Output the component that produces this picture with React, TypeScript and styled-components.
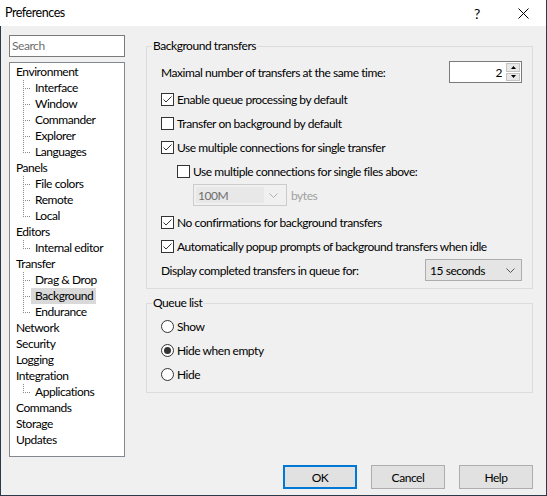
import styled, { createGlobalStyle } from "styled-components";

const GlobalStyle = createGlobalStyle`
  html, body { margin: 0; padding: 0; background: #f0f0f0; }
  body {
    font-family: Lato, "Noto Sans", sans-serif;
    font-size: 12px;
    letter-spacing: -0.45px;
    color: #000;
  }
  * { box-sizing: border-box; }
`;

type Node = { label: string; children?: string[] };

const tree: Node[] = [
  { label: "Environment", children: ["Interface", "Window", "Commander", "Explorer", "Languages"] },
  { label: "Panels", children: ["File colors", "Remote", "Local"] },
  { label: "Editors", children: ["Internal editor"] },
  { label: "Transfer", children: ["Drag & Drop", "Background", "Endurance"] },
  { label: "Network" },
  { label: "Security" },
  { label: "Logging" },
  { label: "Integration", children: ["Applications"] },
  { label: "Commands" },
  { label: "Storage" },
  { label: "Updates" },
];

const Check = ({ checked }: { checked?: boolean }) => (
  <CheckBox>
    {checked && (
      <svg width="11" height="11" viewBox="0 0 11 11">
        <path d="M1.5 5.5 L4 8 L9.5 2.5" fill="none" stroke="#333" strokeWidth="1" />
      </svg>
    )}
  </CheckBox>
);

const Chevron = ({ color = "#555" }: { color?: string }) => (
  <svg width="9" height="5" viewBox="0 0 9 5">
    <path d="M0.5 0.5 L4.5 4.5 L8.5 0.5" fill="none" stroke={color} strokeWidth="1" />
  </svg>
);

export default () => {
  return (
    <>
      <GlobalStyle />
      <Window>
        <TitleBar>
          <Title>Preferences</Title>
          <CaptionButton>?</CaptionButton>
          <CaptionButton>
            <svg width="11" height="11" viewBox="0 0 11 11">
              <path d="M0.5 0.5 L10.5 10.5 M10.5 0.5 L0.5 10.5" stroke="#000" strokeWidth="1" />
            </svg>
          </CaptionButton>
        </TitleBar>

        <Main>
          <Sidebar>
            <Search placeholder="Search" />
            <Tree>
              {tree.map((node) => (
                <div key={node.label}>
                  <TreeRow>
                    <TreeLabel>{node.label}</TreeLabel>
                  </TreeRow>
                  {node.children?.map((c, i) => (
                    <TreeRow key={c} $child $last={i === node.children!.length - 1}>
                      <TreeLabel $child $selected={c === "Background"}>
                        {c}
                      </TreeLabel>
                    </TreeRow>
                  ))}
                </div>
              ))}
            </Tree>
          </Sidebar>

          <Content>
            <Group $first>
              <Legend>Background transfers</Legend>
              <Row $spread>
                <span>Maximal number of transfers at the same time:</span>
                <Spin>
                  <SpinValue>2</SpinValue>
                  <SpinButtons>
                    <SpinButton>
                      <svg width="5" height="3" viewBox="0 0 5 3">
                        <path d="M0 3 L2.5 0 L5 3 Z" fill="#000" />
                      </svg>
                    </SpinButton>
                    <SpinButton>
                      <svg width="5" height="3" viewBox="0 0 5 3">
                        <path d="M0 0 L2.5 3 L5 0 Z" fill="#000" />
                      </svg>
                    </SpinButton>
                  </SpinButtons>
                </Spin>
              </Row>
              <Row $mt={3}>
                <Check checked />
                <span>Enable queue processing by default</span>
              </Row>
              <Row>
                <Check />
                <span>Transfer on background by default</span>
              </Row>
              <Row>
                <Check checked />
                <span>Use multiple connections for single transfer</span>
              </Row>
              <Row $indent={16}>
                <Check />
                <span>Use multiple connections for single files above:</span>
              </Row>
              <Row $indent={32}>
                <DisabledCombo>
                  <ComboField>100M</ComboField>
                  <Chevron color="#b0b0b0" />
                </DisabledCombo>
                <Muted>bytes</Muted>
              </Row>
              <Row $mt={3}>
                <Check checked />
                <span>No confirmations for background transfers</span>
              </Row>
              <Row>
                <Check checked />
                <span>Automatically popup prompts of background transfers when idle</span>
              </Row>
              <Row $spread>
                <span>Display completed transfers in queue for:</span>
                <Combo>
                  <span>15 seconds</span>
                  <Chevron />
                </Combo>
              </Row>
            </Group>

            <Group>
              <Legend>Queue list</Legend>
              <Row>
                <Radio />
                <span>Show</span>
              </Row>
              <Row>
                <Radio $checked />
                <span>Hide when empty</span>
              </Row>
              <Row>
                <Radio />
                <span>Hide</span>
              </Row>
            </Group>
          </Content>
        </Main>

        <Footer>
          <Button $default>OK</Button>
          <Button>Cancel</Button>
          <Button>Help</Button>
        </Footer>
      </Window>
    </>
  );
};

const Window = styled.div`
  width: 547px;
  height: 496px;
  display: flex;
  flex-direction: column;
  background: #f0f0f0;
  border: 1px solid #2b3a48;
  border-top: none;
`;
const TitleBar = styled.div`
  height: 26px;
  flex: none;
  display: flex;
  align-items: stretch;
  background: #fff;
  margin: 0 -1px;
  padding-left: 5px;
  border-right: 1px solid #2b3a48;
`;
const Title = styled.div`
  flex: 1;
  display: flex;
  align-items: center;
  font-size: 12.5px;
  padding-bottom: 1px;
`;
const CaptionButton = styled.div`
  width: 46px;
  display: flex;
  align-items: center;
  justify-content: center;
  font-size: 14px;
`;
const Main = styled.div`
  flex: 1;
  display: flex;
  padding: 9px 0 0 8px;
  gap: 21px;
`;
const Sidebar = styled.div`
  width: 116px;
  flex: none;
  display: flex;
  flex-direction: column;
  gap: 5px;
`;
const Search = styled.input`
  height: 22px;
  border: 1px solid #7a7a7a;
  background: #fff;
  font: inherit;
  letter-spacing: inherit;
  padding: 0 2px 2px;
  outline: none;
  &::placeholder { color: #6d6d6d; }
`;
const Tree = styled.div`
  height: 395px;
  border: 1px solid #828790;
  background: #fff;
  padding-top: 1px;
`;
const TreeRow = styled.div<{ $child?: boolean; $last?: boolean }>`
  position: relative;
  height: 16px;
  display: flex;
  align-items: center;
  ${(p) =>
    p.$child &&
    `
    &::before {
      content: "";
      position: absolute;
      left: 13px;
      top: 0;
      width: 1px;
      height: ${p.$last ? "9px" : "16px"};
      background: repeating-linear-gradient(to bottom, #8a8a8a 0 1px, transparent 1px 2px);
    }
    &::after {
      content: "";
      position: absolute;
      left: 15px;
      top: 8px;
      width: 6px;
      height: 1px;
      background: repeating-linear-gradient(to right, #8a8a8a 0 1px, transparent 1px 2px);
    }
  `}
`;
const TreeLabel = styled.span<{ $child?: boolean; $selected?: boolean }>`
  margin-left: ${(p) => (p.$child ? 21 : 2)}px;
  padding: 0 3px 0 4px;
  line-height: 16px;
  background: ${(p) => (p.$selected ? "#d9d9d9" : "transparent")};
  white-space: nowrap;
`;
const Content = styled.div`
  width: 387px;
  flex: none;
  display: flex;
  flex-direction: column;
`;
const Group = styled.div<{ $first?: boolean }>`
  position: relative;
  margin-top: ${(p) => (p.$first ? 11 : 14)}px;
  border: 1px solid #dcdcdc;
  padding: ${(p) => (p.$first ? "13px 10px 6px 14px" : "10px 10px 6px 14px")};
  display: flex;
  flex-direction: column;
`;
const Legend = styled.span`
  position: absolute;
  top: -9px;
  left: 5px;
  padding: 0 1px;
  line-height: 16px;
  background: #f0f0f0;
`;
const Row = styled.div<{ $indent?: number; $mt?: number; $spread?: boolean }>`
  height: 24px;
  display: flex;
  align-items: center;
  gap: 3px;
  margin-left: ${(p) => p.$indent ?? 0}px;
  margin-top: ${(p) => p.$mt ?? 0}px;
  justify-content: ${(p) => (p.$spread ? "space-between" : "flex-start")};
  white-space: nowrap;
`;
const CheckBox = styled.span`
  width: 13px;
  height: 13px;
  flex: none;
  border: 1px solid #333;
  background: #fff;
  display: flex;
  align-items: center;
  justify-content: center;
`;
const Radio = styled.span<{ $checked?: boolean }>`
  width: 13px;
  height: 13px;
  flex: none;
  border: 1px solid #333;
  border-radius: 50%;
  background: #fff;
  display: flex;
  align-items: center;
  justify-content: center;
  &::after {
    content: "";
    width: 7px;
    height: 7px;
    border-radius: 50%;
    background: ${(p) => (p.$checked ? "#333" : "transparent")};
  }
`;
const Spin = styled.div`
  width: 73px;
  height: 22px;
  border: 1px solid #7a7a7a;
  background: #fff;
  display: flex;
  align-items: center;
  padding: 1px;
`;
const SpinValue = styled.span`
  flex: 1;
  text-align: right;
  padding-right: 4px;
`;
const SpinButtons = styled.div`
  width: 14px;
  height: 18px;
  display: flex;
  flex-direction: column;
  gap: 1px;
`;
const SpinButton = styled.div`
  flex: 1;
  background: #e8e8e8;
  border: 1px solid #c4c4c4;
  display: flex;
  align-items: center;
  justify-content: center;
`;
const DisabledCombo = styled.div`
  width: 94px;
  height: 22px;
  border: 1px solid #cccccc;
  background: #f0f0f0;
  display: flex;
  align-items: center;
  padding: 2px 8px 2px 2px;
  gap: 5px;
  color: #6d6d6d;
`;
const ComboField = styled.span`
  flex: 1;
  height: 100%;
  background: #e8e8e8;
  display: flex;
  align-items: center;
  padding-left: 2px;
`;
const Muted = styled.span`
  color: #a0a0a0;
  margin-left: 1px;
`;
const Combo = styled.div`
  width: 97px;
  height: 22px;
  border: 1px solid #adadad;
  background: #e5e5e5;
  display: flex;
  align-items: center;
  justify-content: space-between;
  padding: 0 6px 0 4px;
`;
const Footer = styled.div`
  flex: none;
  display: flex;
  justify-content: flex-end;
  gap: 14px;
  padding: 8px 13px 6px 0;
`;
const Button = styled.div<{ $default?: boolean }>`
  width: 74px;
  height: 24px;
  display: flex;
  align-items: center;
  justify-content: center;
  background: #e1e1e1;
  border: ${(p) => (p.$default ? "2px solid #0078d7" : "1px solid #adadad")};
`;
